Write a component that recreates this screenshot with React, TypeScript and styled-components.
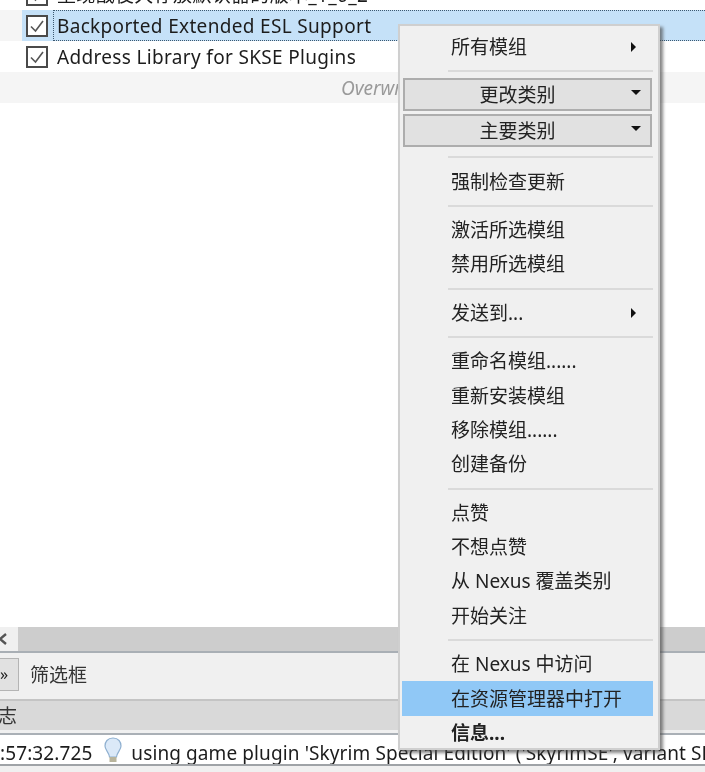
import React from "react";
import styled, { createGlobalStyle } from "styled-components";

const Global = createGlobalStyle`
  html, body { margin: 0; padding: 0; background: #fff; }
  body { width: 705px; height: 772px; overflow: hidden; }
  * { box-sizing: border-box; }
`;
const FONT = `"Noto Sans", "Noto Sans CJK SC", sans-serif`;
const Page = styled.div`
  position: relative; width: 705px; height: 772px; overflow: hidden;
  display: flex; flex-direction: column; background: #fff;
  font-family: ${FONT}; color: #1c1c1c; font-size: 19px; filter: blur(0.35px);
`;
const List = styled.div`flex: 1; margin-top: -21px; min-height: 0;`;
const Row = styled.div<{ $alt?: boolean }>`
  height: 31px; position: relative; display: flex; align-items: center; padding-left: 26px;
  background: ${p => (p.$alt ? "#f5f5f5" : "#fff")}; white-space: nowrap;
`;
const SelectedBand = styled.div`
  position: absolute; left: 22px; right: 0; top: 0; bottom: 0; background: #c5e1f8;
  &::after { content: ""; position: absolute; left: 31px; right: 0; top: 0; bottom: 0; border: 1px dotted #3c5870; border-right: 0; }
`;
const Check = styled.svg`width: 22px; height: 22px; flex: none; position: relative;`;
const Name = styled.span`margin-left: 9px; position: relative; font-size: 19px; letter-spacing: 0.33px; line-height: 24px;`;
const OverwriteLabel = styled.span`
  margin-left: 315px; font-style: italic; color: #9a9a9a; font-size: 19px;
`;
const ScrollBar = styled.div`height: 24px; display: flex; background: #cdcdcd; flex: none;`;
const ScrollButton = styled.div`
  width: 18px; background: #f0f0f0; display: flex; align-items: center; justify-content: flex-start;
`;
const ScrollChevron = styled.svg`margin-left: -2px;`;
const Filter = styled.div`
  height: 50px; flex: none; display: flex; align-items: center; gap: 11px; background: #f0f0f0;
  border-top: 2px solid #a9afb5; border-bottom: 2px solid #c4c4c4; padding-bottom: 3px;
`;
const FilterButton = styled.div`
  width: 19px; height: 33px; background: #e1e1e1; border: 1px solid #b4b4b4; border-left: 0;
  display: flex; align-items: center; justify-content: flex-start; font-size: 16px; padding-bottom: 2px; overflow: hidden;
`;
const FilterLabel = styled.span`font-size: 19px; line-height: 24px; color: #333;`;
const LogHead = styled.div`
  height: 32px; flex: none; background: #d9d9d9; display: flex; align-items: center;
  border-bottom: 3px solid #f0f0f0; font-size: 19px; line-height: 24px;
  overflow: hidden; color: #333;
`;
const HeadClip = styled.span`margin-left: -2px;`;
const LogRow = styled.div`
  height: 33px; flex: none; display: flex; align-items: center; white-space: nowrap; overflow: hidden;
  border-top: 2px solid #aab0b6; border-bottom: 2px solid #9fa3a7; font-size: 19px; background: #fff;
  padding-top: 6px; line-height: 24px; letter-spacing: 0.1px;
`;
const LogTime = styled.span`margin-left: 0;`;
const Bulb = styled.svg`width: 20px; height: 28px; flex: none; margin: -6px 8px 0 11px;`;
const Tail = styled.div`height: 6px; flex: none; background: #f0f0f0;`;

const Menu = styled.div`
  position: absolute; left: 398px; top: 24px; width: 262px; height: 726px;
  background: #f0f0f0; border: 2px solid #cfcfcf; box-shadow: 3px 3px 3px rgba(70,70,70,.65);
  display: flex; flex-direction: column; padding: 4px 5px 0 2px; font-size: 19px; color: #222; line-height: 24px;
`;
const Item = styled.div<{ $active?: boolean; $bold?: boolean }>`
  height: 34.4px; flex: none; display: flex; align-items: center; padding-left: 49px; position: relative;
  background: ${p => (p.$active ? "#90c8f6" : "transparent")};
  font-weight: ${p => (p.$bold ? 700 : 400)};
  white-space: nowrap;
`;
const SubArrow = styled.span`
  position: absolute; left: 229px; top: 50%; margin-top: -5px; width: 0; height: 0;
  border-left: 5px solid #111; border-top: 5px solid transparent; border-bottom: 5px solid transparent;
`;
const Sep = styled.div`height: 2px; flex: none; background: #dadada; margin: 6px 0 6px 46px;`;
const Combo = styled.div`
  height: 33px; flex: none; margin: 0 0 3px 1px; width: 249px; background: #e1e1e1; border: 2px solid #adadad;
  display: flex; align-items: center; justify-content: center; position: relative; padding-right: 20px;
`;
const DropArrow = styled.span`
  position: absolute; right: 9px; top: 10px; width: 0; height: 0;
  border-top: 5px solid #111; border-left: 5px solid transparent; border-right: 5px solid transparent;
`;

const CheckIcon = () => (
  <Check viewBox="0 0 22 22">
    <rect x="1" y="1" width="20" height="20" fill="#fff" stroke="#4a4a4a" strokeWidth="2" />
    <path d="M5 11.5 L9.5 16 L17 6" fill="none" stroke="#555" strokeWidth="1.6" />
  </Check>
);

export default function App() {
  return (
    <Page>
      <Global />
      <List>
        <Row><CheckIcon /><Name>重现战役大存放默认器的版本_1_0_2</Name></Row>
        <Row $alt>
          <SelectedBand />
          <CheckIcon /><Name>Backported Extended ESL Support</Name>
        </Row>
        <Row><CheckIcon /><Name>Address Library for SKSE Plugins</Name></Row>
        <Row $alt><OverwriteLabel>Overwrite</OverwriteLabel></Row>
      </List>
      <ScrollBar>
        <ScrollButton>
          <ScrollChevron width="9" height="12" viewBox="0 0 9 12"><path d="M8 1 L2 6 L8 11" fill="none" stroke="#555" strokeWidth="2.4" /></ScrollChevron>
        </ScrollButton>
      </ScrollBar>
      <Filter>
        <FilterButton>»</FilterButton>
        <FilterLabel>筛选框</FilterLabel>
      </Filter>
      <LogHead><HeadClip>志</HeadClip></LogHead>
      <LogRow>
        <LogTime>:57:32.725</LogTime>
        <Bulb viewBox="0 0 20 28">
          <path d="M10 2 C4.5 2 2 6 2 10 C2 14 6 16 6.5 21 L13.5 21 C14 16 18 14 18 10 C18 6 15.5 2 10 2 Z" fill="#dbe9f8" stroke="#8fb0d0" strokeWidth="1.2" />
          <rect x="6.5" y="21" width="7" height="5" fill="#b8b49c" />
        </Bulb>
        <span>using game plugin 'Skyrim Special Edition' ('SkyrimSE', variant SE)</span>
      </LogRow>
      <Tail />
      <Menu>
        <Item>所有模组<SubArrow /></Item>
        <Sep />
        <Combo>更改类别<DropArrow /></Combo>
        <Combo>主要类别<DropArrow /></Combo>
        <Sep />
        <Item>强制检查更新</Item>
        <Sep />
        <Item>激活所选模组</Item>
        <Item>禁用所选模组</Item>
        <Sep />
        <Item>发送到...<SubArrow /></Item>
        <Sep />
        <Item>重命名模组......</Item>
        <Item>重新安装模组</Item>
        <Item>移除模组......</Item>
        <Item>创建备份</Item>
        <Sep />
        <Item>点赞</Item>
        <Item>不想点赞</Item>
        <Item>从 Nexus 覆盖类别</Item>
        <Item>开始关注</Item>
        <Sep />
        <Item>在 Nexus 中访问</Item>
        <Item $active>在资源管理器中打开</Item>
        <Item $bold>信息...</Item>
      </Menu>
    </Page>
  );
}
